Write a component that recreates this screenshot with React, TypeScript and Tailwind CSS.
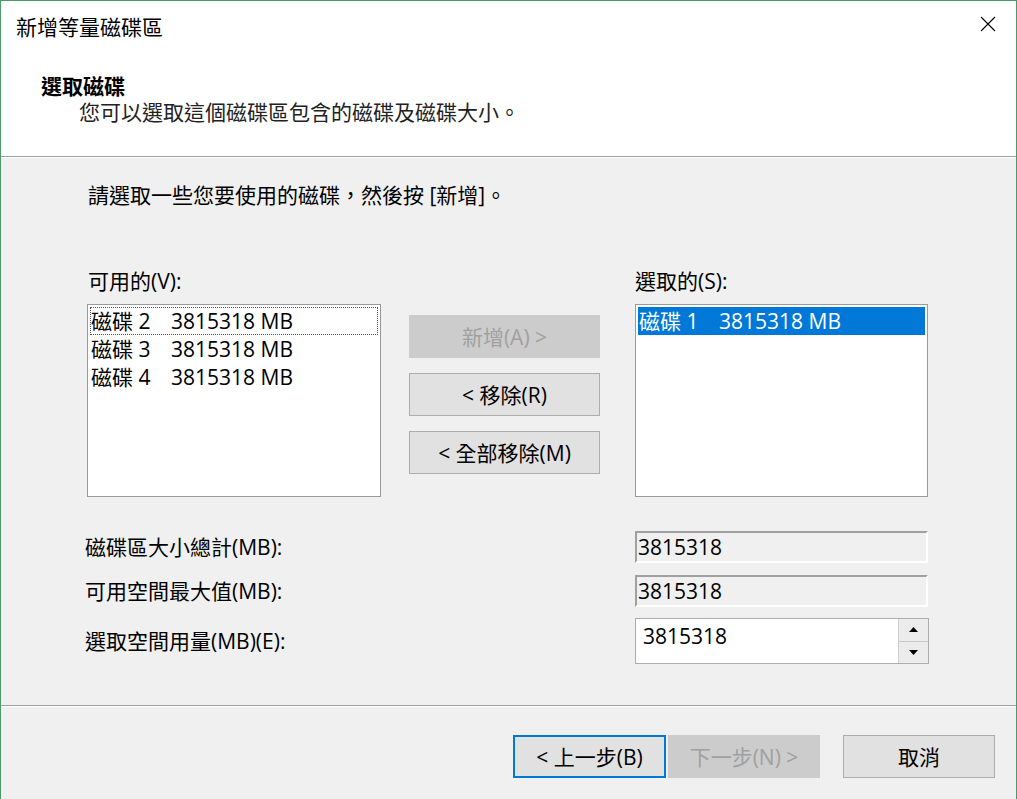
import React from 'react'

const font = "font-['Open_Sans','Noto_Sans_CJK_TC',sans-serif]"

function Btn({ label, disabled, primary, w = 'w-[191px]' }: { label: string; disabled?: boolean; primary?: boolean; w?: string }) {
  let cls = 'bg-[#e1e1e1] border border-[#adadad] text-black'
  if (disabled) cls = 'bg-[#cccccc] border border-[#cccccc] text-[#a0a0a0]'
  if (primary) cls = 'bg-[#e1e1e1] border-2 border-[#0078d7] text-black'
  return (
    <div className={`${w} h-[43px] flex items-center justify-center text-[21px] leading-[26px] ${cls}`}>
      {label}
    </div>
  )
}

function ReadOnlyBox({ value }: { value: string }) {
  return (
    <div className="w-[293px] h-[32px] bg-[#f0f0f0] border-2 border-t-[#a0a0a0] border-l-[#a0a0a0] border-b-white border-r-white flex items-center pl-[1px] text-[21px] leading-[26px]">
      {value}
    </div>
  )
}

export default function App() {
  const available = ['2', '3', '4']
  return (
    <div className={`w-[1017px] h-[799px] bg-[#f0f0f0] border-l border-t border-r border-[#4a9a6a] flex flex-col text-black ${font}`}>
      {/* header */}
      <div className="h-[156px] shrink-0 bg-white border-b border-[#a0a0a0]">
        <div className="h-[52px] flex items-center justify-between pl-[15px] pr-[20px]">
          <span className="text-[21px] leading-[26px]">新增等量磁碟區</span>
          <svg width="16" height="16" viewBox="0 0 16 16" className="mt-[-6px]">
            <path d="M1 1 L15 15 M15 1 L1 15" stroke="#000" strokeWidth="1.1" fill="none" />
          </svg>
        </div>
        <div className="mt-[20px] pl-[40px] text-[21px] leading-[26px] font-bold">選取磁碟</div>
        <div className="pl-[78px] text-[21px] leading-[26px] text-[#222]">您可以選取這個磁碟區包含的磁碟及磁碟大小。</div>
      </div>

      {/* body */}
      <div className="flex-1 border-t border-white pt-[24px] pl-[86px]">
        <div className="text-[21px] leading-[26px] pl-[1px]">請選取一些您要使用的磁碟，然後按 [新增]。</div>

        <div className="mt-[60px] flex">
          <div className="w-[294px]">
            <div className="text-[21px] leading-[26px] pl-[1px]">可用的(V):</div>
            <div className="mt-[10px] h-[193px] bg-white border border-[#9a9a9a] p-[2px]">
              {available.map((n, i) => (
                <div
                  key={n}
                  className={`h-[28px] flex items-center text-[21px] leading-[26px] pl-[1px] ${i === 0 ? 'outline outline-1 outline-dotted outline-[#555] -outline-offset-1' : ''}`}
                >
                  <span className="w-[80px]">磁碟 {n}</span>
                  <span>3815318 MB</span>
                </div>
              ))}
            </div>
          </div>

          <div className="ml-[28px] pt-[47px] flex flex-col gap-[15px]">
            <Btn label="新增(A) >" disabled />
            <Btn label="< 移除(R)" />
            <Btn label="< 全部移除(M)" />
          </div>

          <div className="ml-[35px] w-[293px]">
            <div className="text-[21px] leading-[26px]">選取的(S):</div>
            <div className="mt-[10px] h-[193px] bg-white border border-[#9a9a9a] p-[2px]">
              <div className="h-[28px] flex items-center bg-[#0078d7] text-white text-[21px] leading-[26px] pl-[1px]">
                <span className="w-[80px]">磁碟 1</span>
                <span>3815318 MB</span>
              </div>
            </div>
          </div>
        </div>

        <div className="mt-[34px] flex flex-col gap-[12px] pr-[88px]">
          <div className="flex items-center justify-between">
            <span className="text-[21px] leading-[26px] -ml-[2px]">磁碟區大小總計(MB):</span>
            <ReadOnlyBox value="3815318" />
          </div>
          <div className="flex items-center justify-between">
            <span className="text-[21px] leading-[26px] -ml-[2px]">可用空間最大值(MB):</span>
            <ReadOnlyBox value="3815318" />
          </div>
          <div className="flex items-center justify-between -mt-[1px]">
            <span className="text-[21px] leading-[26px] -ml-[2px]">選取空間用量(MB)(E):</span>
            <div className="w-[294px] h-[46px] bg-white border border-[#adadad] flex -mr-[1px]">
              <div className="flex-1 pl-[7px] pt-[4px] text-[21px] leading-[26px]">3815318</div>
              <div className="w-[30px] flex flex-col border-l border-[#d0d0d0]">
                <div className="flex-1 bg-[#ececec] border-b border-[#c8c8c8] flex items-center justify-center">
                  <svg width="9" height="5" viewBox="0 0 9 5"><path d="M4.5 0 L9 5 L0 5 Z" fill="#000" /></svg>
                </div>
                <div className="flex-1 bg-[#ececec] flex items-center justify-center">
                  <svg width="9" height="5" viewBox="0 0 9 5"><path d="M0 0 L9 0 L4.5 5 Z" fill="#000" /></svg>
                </div>
              </div>
            </div>
          </div>
        </div>
      </div>

      {/* footer */}
      <div className="h-[94px] shrink-0 border-t border-[#a0a0a0]">
        <div className="border-t border-white h-full pt-[28px] pr-[21px] flex justify-end">
          <Btn label="< 上一步(B)" primary w="w-[153px]" />
          <div className="ml-[2px]">
            <Btn label="下一步(N) >" disabled w="w-[152px]" />
          </div>
          <div className="ml-[23px]">
            <Btn label="取消" w="w-[152px]" />
          </div>
        </div>
      </div>
    </div>
  )
}
